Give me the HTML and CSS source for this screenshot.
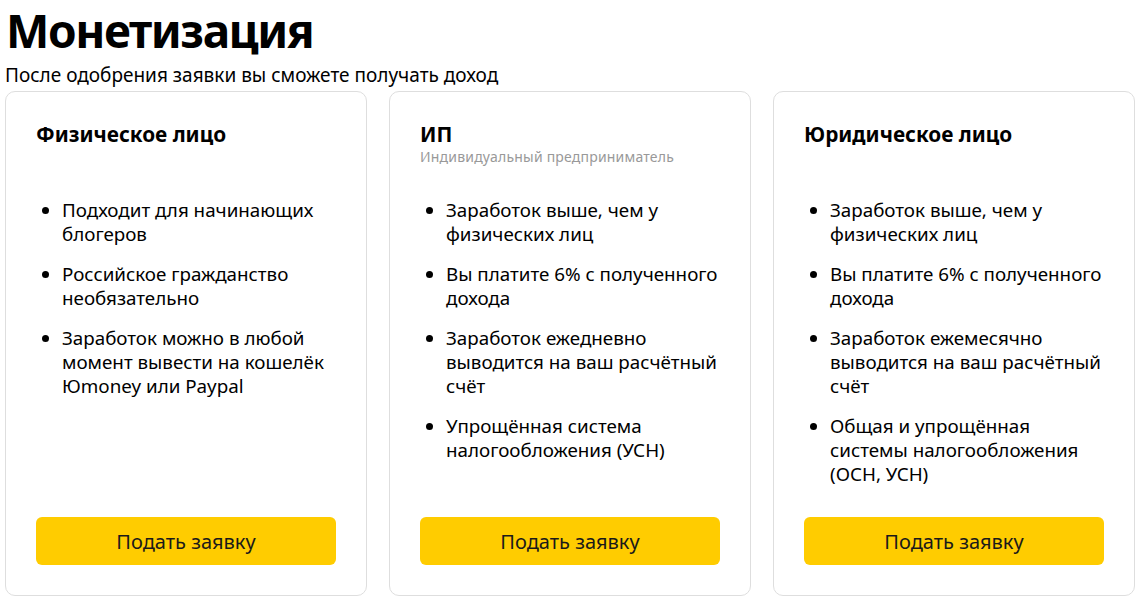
FILE: index.html
```html
<!DOCTYPE html>
<html lang="ru">
<head>
<meta charset="utf-8">
<title>Монетизация</title>
<link rel="stylesheet" href="styles.css">
</head>
<body>
<h1 class="title">Монетизация</h1>
<p class="lead">После одобрения заявки вы сможете получать доход</p>
<div class="cards">
  <section class="card">
    <div class="card-head">
      <h2 class="card-title">Физическое лицо</h2>
    </div>
    <ul class="features">
      <li>Подходит для начинающих блогеров</li>
      <li>Российское гражданство необязательно</li>
      <li>Заработок можно в любой момент вывести на кошелёк Юmoney или Paypal</li>
    </ul>
    <button class="apply">Подать заявку</button>
  </section>
  <section class="card">
    <div class="card-head">
      <h2 class="card-title">ИП</h2>
      <div class="card-sub">Индивидуальный предприниматель</div>
    </div>
    <ul class="features">
      <li>Заработок выше, чем у физических лиц</li>
      <li>Вы платите 6% с полученного дохода</li>
      <li>Заработок ежедневно выводится на ваш расчётный счёт</li>
      <li>Упрощённая система налогообложения (УСН)</li>
    </ul>
    <button class="apply">Подать заявку</button>
  </section>
  <section class="card">
    <div class="card-head">
      <h2 class="card-title">Юридическое лицо</h2>
    </div>
    <ul class="features">
      <li>Заработок выше, чем у физических лиц</li>
      <li>Вы платите 6% с полученного дохода</li>
      <li>Заработок ежемесячно выводится на ваш расчётный счёт</li>
      <li>Общая и упрощённая системы налогообложения (ОСН, УСН)</li>
    </ul>
    <button class="apply">Подать заявку</button>
  </section>
</div>
</body>
</html>
```
FILE: styles.css
```css
html, body {
  background: #fff;
}
body {
  margin: 0;
  padding: 0 6px 0 5px;
  font-family: "Noto Sans", "Open Sans", sans-serif;
  color: #000;
}
.title {
  margin: 0;
  padding: 0 0 0 1px;
  font-size: 46px;
  line-height: 60px;
  font-weight: 700;
  letter-spacing: -1.4px;
}
.lead {
  margin: 3px 0 0;
  font-size: 19px;
  line-height: 24px;
}
.cards {
  display: grid;
  grid-template-columns: repeat(3, 362px);
  gap: 22px;
  margin-top: 4px;
}
.card {
  box-sizing: border-box;
  height: 505px;
  border: 1px solid #dedede;
  border-radius: 10px;
  padding: 30px;
  display: flex;
  flex-direction: column;
}
.card-head {
  min-height: 76px;
}
.card-title {
  margin: 0;
  font-size: 20.8px;
  line-height: 24px;
  font-weight: 700;
}
.card-sub {
  margin-top: 1px;
  font-size: 14px;
  line-height: 20px;
  letter-spacing: 0.2px;
  color: #999;
}
.features {
  margin: 0;
  padding-left: 26px;
  font-size: 18.8px;
  line-height: 24px;
}
.features li + li {
  margin-top: 16px;
}
.apply {
  margin-top: auto;
  height: 48px;
  width: 100%;
  border: 0;
  border-radius: 6px;
  background: #ffcc00;
  font-family: inherit;
  font-size: 20px;
  color: #1a1a1a;
}
```
